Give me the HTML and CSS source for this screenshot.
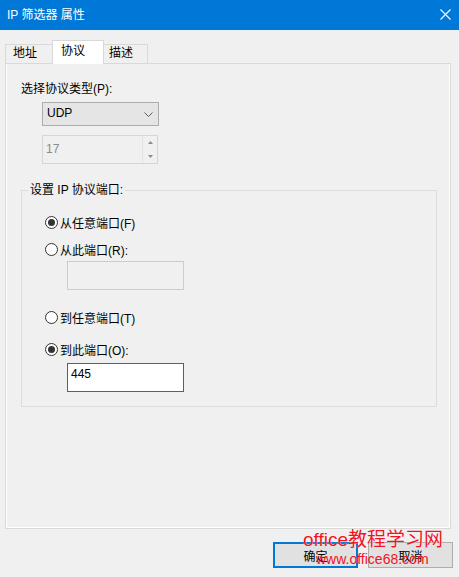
FILE: index.html
```html
<!DOCTYPE html>
<html lang="zh-CN">
<head>
<meta charset="utf-8">
<title>IP 筛选器 属性</title>
<link rel="stylesheet" href="styles.css">
</head>
<body>
<div class="window">
  <div class="titlebar">
    <span class="title">IP 筛选器 属性</span>
    <svg class="close" width="11" height="11" viewBox="0 0 11 11"><path d="M0.5 0.5L10.5 10.5M10.5 0.5L0.5 10.5" stroke="#fff" stroke-width="1.1" fill="none"/></svg>
  </div>
  <div class="tabs">
    <div class="tab tab-addr">地址</div>
    <div class="tab tab-proto active">协议</div>
    <div class="tab tab-desc">描述</div>
  </div>
  <div class="panel">
    <div class="label">选择协议类型(P):</div>
    <div class="combo">
      <span>UDP</span>
      <svg width="9" height="5" viewBox="0 0 9 5"><path d="M0.5 0.5L4.5 4.5L8.5 0.5" stroke="#606060" stroke-width="1" fill="none"/></svg>
    </div>
    <div class="spin">
      <span class="spin-value">17</span>
      <div class="spin-btns">
        <div class="spin-btn"><svg width="5" height="3" viewBox="0 0 5 3"><path d="M0 3L2.5 0L5 3Z" fill="#8a8a8a"/></svg></div>
        <div class="spin-btn"><svg width="5" height="3" viewBox="0 0 5 3"><path d="M0 0L2.5 3L5 0Z" fill="#8a8a8a"/></svg></div>
      </div>
    </div>
    <fieldset class="group">
      <legend>设置 IP 协议端口:</legend>
      <div class="radio r1"><span class="dot checked"></span><span>从任意端口(F)</span></div>
      <div class="radio r2"><span class="dot"></span><span>从此端口(R):</span></div>
      <div class="textbox disabled"></div>
      <div class="radio r3"><span class="dot"></span><span>到任意端口(T)</span></div>
      <div class="radio r4"><span class="dot checked"></span><span>到此端口(O):</span></div>
      <div class="textbox active"><span>445</span></div>
    </fieldset>
  </div>
  <div class="buttons">
    <div class="btn default">确定</div>
    <div class="btn">取消</div>
  </div>
  <div class="watermark">
    <div class="wm1">office教程学习网</div>
    <div class="wm2">www.office68.com</div>
  </div>
</div>
</body>
</html>
```
FILE: styles.css
```css
* { box-sizing: border-box; }
html, body { margin: 0; padding: 0; }
body {
  background: #f0f0f0;
  font-family: "Liberation Sans", "Noto Sans CJK SC", sans-serif;
  font-size: 12px;
  color: #000;
}
.window {
  position: relative;
  width: 459px;
  height: 577px;
  overflow: hidden;
  background: #f0f0f0;
}
.titlebar {
  height: 30px;
  background: #0078d7;
  color: #fff;
  display: flex;
  align-items: center;
  justify-content: space-between;
  padding: 0 8px 0 7px;
}
.title { line-height: 16px; }
.close { display: block; margin-top: -2px; }

.tabs {
  position: relative;
  z-index: 1;
  display: flex;
  align-items: flex-end;
  height: 24px;
  margin: 10px 0 0 5px;
}
.tab {
  height: 19px;
  margin-bottom: 1px;
  border: 1px solid #d9d9d9;
  border-bottom: none;
  background: #f0f0f0;
  line-height: 16px;
}
.tab-addr { width: 48px; padding-left: 7px; }
.tab-proto { width: 52px; margin-left: -1px; padding-left: 8px; }
.tab-desc { width: 45px; margin-left: -1px; padding-left: 5px; }
.tab.active {
  height: 24px;
  margin-bottom: 0;
  background: #fff;
  padding-top: 2px;
}

.panel {
  margin: -1px 8px 0 5px;
  height: 466px;
  border: 1px solid #d9d9d9;
  background: #f0f0f0;
  box-shadow: inset 1px 0 #fff, inset -1px 0 #fff, inset 0 -1px #fff;
  padding: 17px 13px 0 15px;
}
.label { line-height: 16px; }

.combo {
  margin: 5px 0 0 21px;
  width: 117px;
  height: 24px;
  border: 1px solid #adadad;
  background: #e5e5e5;
  display: flex;
  align-items: center;
  justify-content: space-between;
  padding: 0 5px 3px 4px;
}
.combo svg { margin-top: 3px; }

.spin {
  margin: 9px 0 0 21px;
  width: 116px;
  height: 29px;
  border: 1px solid #d6d6d6;
  background: #f0f0f0;
  display: flex;
  justify-content: space-between;
}
.spin-value {
  color: #8a8a8a;
  padding: 5px 0 0 3px;
  line-height: 16px;
}
.spin-btns {
  width: 15px;
  display: flex;
  flex-direction: column;
  border-left: 1px solid #e3e3e3;
}
.spin-btn {
  flex: 1;
  display: flex;
  align-items: center;
  justify-content: center;
}
.spin-btn svg { display: block; }

.group {
  margin: 18px 0 0 0;
  border: 1px solid #dcdcdc;
  padding: 16px 0 14px 0;
  min-inline-size: 0;
}
.group legend {
  margin-left: 6px;
  padding: 0 2px;
  line-height: 16px;
}
.radio {
  display: flex;
  align-items: center;
  height: 16px;
  margin-left: 23px;
}
.radio .dot {
  width: 13px;
  height: 13px;
  border: 1px solid #333;
  border-radius: 50%;
  background: #fff;
  margin-right: 2px;
  display: flex;
  align-items: center;
  justify-content: center;
}
.radio .dot.checked::after {
  content: "";
  width: 7px;
  height: 7px;
  border-radius: 50%;
  background: #333;
}
.r2 { margin-top: 11px; }
.r3 { margin-top: 19px; }
.r4 { margin-top: 16px; }

.textbox {
  margin-left: 45px;
  width: 117px;
  height: 29px;
  display: flex;
  align-items: center;
  padding: 0 0 7px 3px;
}
.textbox.disabled {
  margin-top: 4px;
  border: 1px solid #cccccc;
  background: #f0f0f0;
}
.textbox.active {
  margin-top: 6px;
  border: 1px solid #0078d7;
  background: #fff;
}

.buttons {
  display: flex;
  justify-content: flex-end;
  gap: 10px;
  margin-top: 13px;
  padding-right: 6px;
}
.btn {
  width: 85px;
  height: 26px;
  border: 1px solid #adadad;
  background: #e1e1e1;
  display: flex;
  align-items: center;
  justify-content: center;
}
.btn.default {
  border: 2px solid #0078d7;
}

.watermark {
  position: absolute;
  left: 303px;
  top: 529px;
  color: #f0141e;
  font-family: "Liberation Sans", "Noto Sans CJK SC", sans-serif;
  pointer-events: none;
}
.wm1 {
  font-size: 19px;
  line-height: 22px;
  text-shadow: 0 0 1px #fff;
}
.wm2 {
  font-size: 14px;
  line-height: 16px;
  margin-left: 13px;
}
```
